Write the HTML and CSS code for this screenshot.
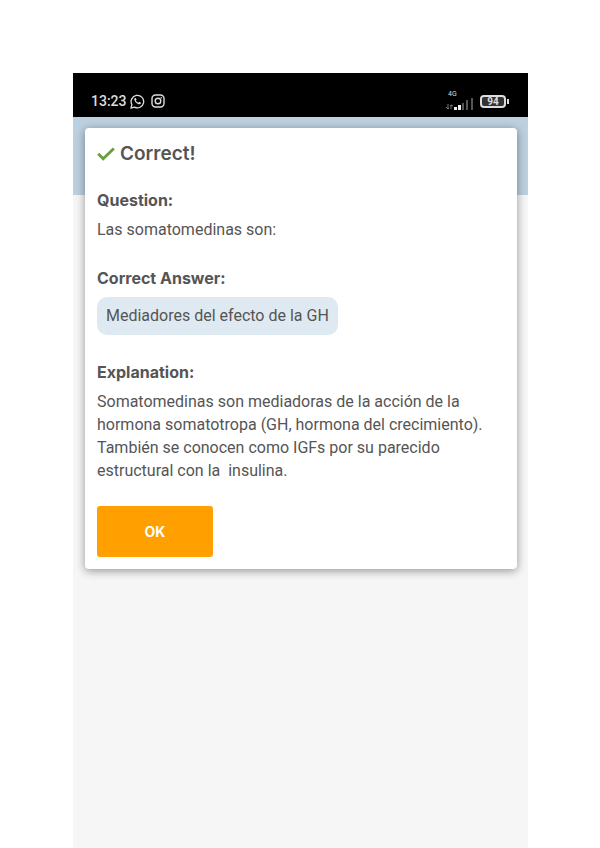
FILE: index.html
```
<!DOCTYPE html>
<html lang="es">
<head>
  <meta charset="UTF-8">
  <meta name="viewport" content="width=device-width, initial-scale=1.0">
  <title>Correct!</title>
  <link rel="stylesheet" href="styles.css">
</head>
<body>
  <div class="phone">
    <header class="status-bar">
      <span class="time">13:23</span>
      <svg class="whatsapp" viewBox="0 0 16 16" width="15" height="15" fill="none" stroke="#ddd" stroke-width="1.4" stroke-linejoin="round">
        <path d="M1 15l1-3.7A6.7 6.7 0 1 1 4.7 14z"/>
        <path d="M5.2 4.2c-1.5 1.6.2 4 1.7 5.3 1.6 1.4 3.5 2.3 4.7.7l.1-.9-1.8-1-1 1C7.7 8.9 6.700 7.900 6.200 6.900l.8-.9-.8-1.800z" fill="#ddd" stroke="none"/>
      </svg>
      <svg class="instagram" viewBox="0 0 14 14" width="14" height="14" fill="none" stroke="#ddd" stroke-width="1.4">
        <rect x="1" y="1" width="12" height="12" rx="3.5"/>
        <circle cx="7" cy="7" r="2.8"/>
        <circle cx="10.3" cy="3.7" r=".8" fill="#ddd" stroke="none"/>
      </svg>
      <div class="network">
        <span class="network-type">4G</span>
        <svg viewBox="0 0 28 13" width="28" height="13">
          <path d="M2 6v5M0 9l2 2 1-1M5 11V7M4 8l1-1 2 1" fill="none" stroke="#777" stroke-width="1"/>
          <path d="M8 9h3v3H8zM12 7h3v5h-3z" fill="#eee"/>
          <path d="M16 5h2v7h-2zM20 2h2v10h-2zM25 0h2v12h-2z" fill="#555"/>
        </svg>
      </div>
      <div class="battery">94</div>
    </header>

    <main class="screen">
      <div class="modal">
        <h1>
          <svg viewBox="0 0 18 14" width="18" height="14" fill="none" stroke="#689f38" stroke-width="2.8">
            <path d="M1.2 6.8l5 5L16.8 1.4"/>
          </svg>
          Correct!
        </h1>

        <section>
          <h2>Question:</h2>
          <p>Las somatomedinas son:</p>
        </section>

        <section>
          <h2>Correct Answer:</h2>
          <div class="answer">Mediadores del efecto de la GH</div>
        </section>

        <section>
          <h2>Explanation:</h2>
          <p>Somatomedinas son mediadoras de la acción de la hormona somatotropa (GH, hormona del crecimiento). También se conocen como IGFs por su parecido estructural con la&nbsp; insulina.</p>
        </section>

        <button type="button">OK</button>
      </div>
    </main>
  </div>
</body>
</html>
```
FILE: styles.css
```
* {
  margin: 0;
  padding: 0;
  box-sizing: border-box;
}

body {
  min-height: 100vh;
  padding: 73px 72px 0 73px;
  display: flex;
  background: #fff;
  color: #555;
  font-family: Roboto, sans-serif;
  font-size: 16px;
  line-height: 23px;
}

.phone {
  flex: 1;
  display: flex;
  flex-direction: column;
  background: #f6f6f6;
}

/* Status bar */
.status-bar {
  height: 44px;
  padding: 12px 22px 0 18px;
  display: flex;
  align-items: center;
  background: #000;
  color: #ddd;
}

.time {
  font-size: 14px;
  font-weight: 500;
}

.whatsapp {
  margin-left: 3px;
}

.instagram {
  margin-left: 6px;
}

.network {
  margin-left: auto;
  display: flex;
  flex-direction: column;
}

.network-type {
  padding-left: 2px;
  font-size: 7px;
  line-height: 7px;
}

.battery {
  position: relative;
  width: 26px;
  height: 13px;
  margin-left: 6px;
  border: 2px solid #ddd;
  border-radius: 4px;
  background: #333;
  font-size: 10px;
  font-weight: 700;
  line-height: 9px;
  text-align: center;
}

.battery::after {
  content: "";
  position: absolute;
  top: 2px;
  right: -5px;
  width: 2px;
  height: 5px;
  background: #ddd;
}

/* Content */
.screen {
  flex: 1;
  padding: 11px 11px 24px 12px;
  background: linear-gradient(#bcd0df, #bcd0df) no-repeat top / 100% 78px;
}

.modal {
  padding: 12px;
  background: #fff;
  border-radius: 4px;
  box-shadow: 0 2px 10px rgba(0, 0, 0, 0.4);
}

h1,
h2 {
  font-family: Inter, sans-serif;
}

h1 {
  display: flex;
  align-items: center;
  gap: 5px;
  margin-bottom: 21px;
  font-size: 19px;
  font-weight: 600;
  line-height: 27px;
}

h2 {
  font-size: 16px;
  font-weight: 700;
  line-height: 24px;
}

section {
  margin-bottom: 25px;
}

section:last-of-type {
  margin-bottom: 24px;
}

section p {
  margin-top: 6px;
}

.answer {
  width: fit-content;
  margin-top: 7px;
  padding: 7px 9px 8px;
  background: #dfe9f1;
  border-radius: 10px;
}

button {
  display: block;
  width: 116px;
  height: 51px;
  border: none;
  border-radius: 3px;
  background: #ffa000;
  color: #fff;
  font-family: Inter, sans-serif;
  font-size: 14px;
  font-weight: 700;
  cursor: pointer;
}
```
